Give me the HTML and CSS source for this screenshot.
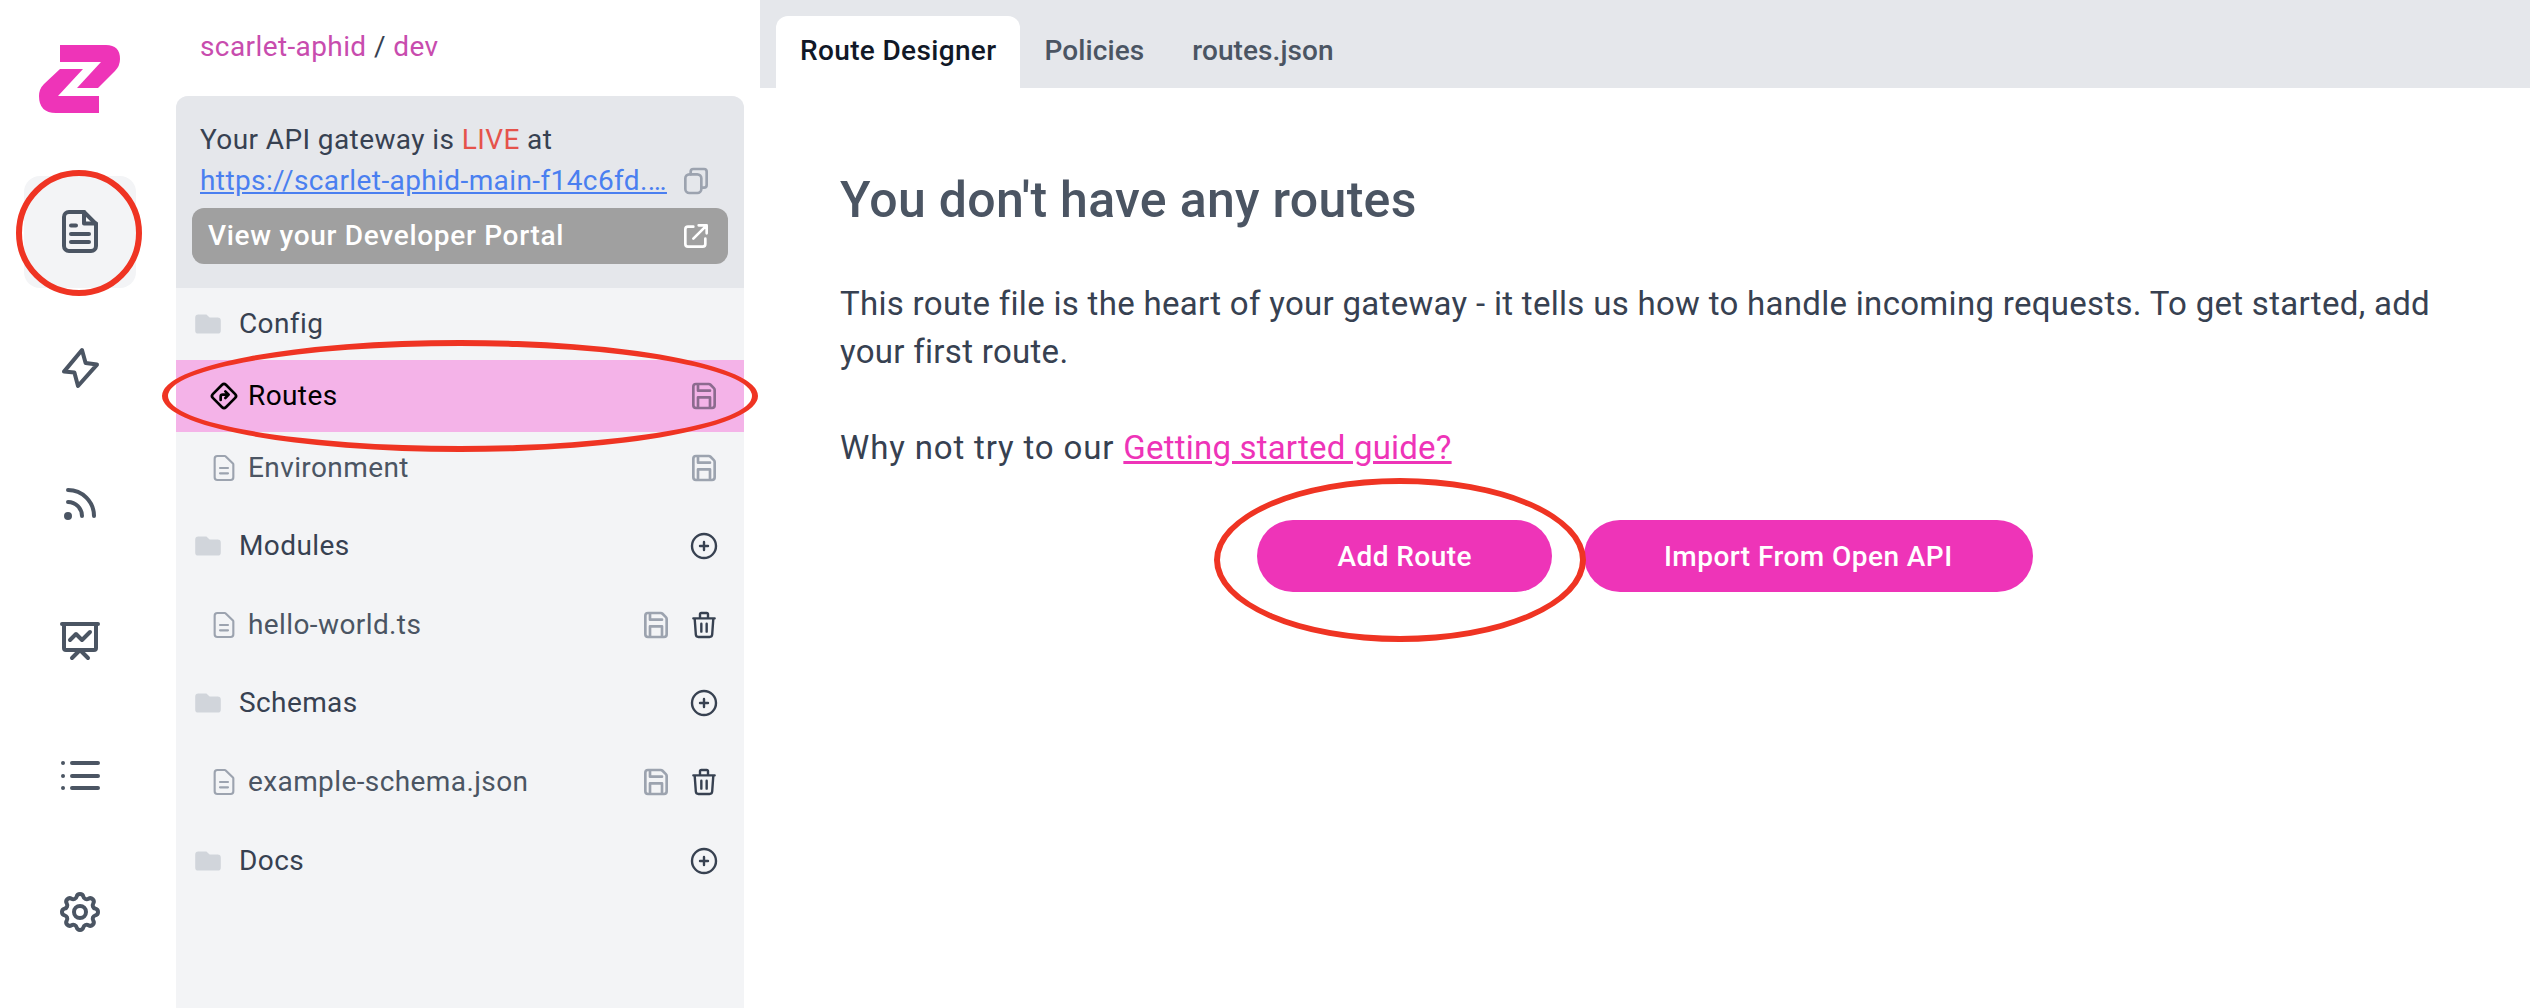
FILE: index.html
```html
<!DOCTYPE html>
<html lang="en">
<head>
    <meta charset="UTF-8">
    <meta name="viewport" content="width=device-width, initial-scale=1.0">
    <title>Route Designer</title>
    <link rel="stylesheet" href="styles.css">
</head>
<body>
    <svg width="0" height="0" class="defs">
        <symbol id="i-file" viewBox="0 0 24 24"><path d="M9 12h6m-6 4h6m2 5H7a2 2 0 01-2-2V5a2 2 0 012-2h5.586a1 1 0 01.707.293l5.414 5.414a1 1 0 01.293.707V19a2 2 0 01-2 2z"/></symbol>
        <symbol id="i-save" viewBox="0 0 24 24"><path d="M6 3h9.500a2 2 0 011.400.600l2.500 2.500a2 2 0 01.600 1.400V19a2 2 0 01-2 2H6a2 2 0 01-2-2V5a2 2 0 012-2zM7.500 3.500V8h9M7.500 21v-8h9v8"/></symbol>
        <symbol id="i-plus" viewBox="0 0 24 24"><path d="M12 9v3m0 0v3m0-3h3m-3 0H9m12 0a9 9 0 11-18 0 9 9 0 0118 0z"/></symbol>
        <symbol id="i-trash" viewBox="0 0 24 24"><path d="M19 7l-.867 12.142A2 2 0 0116.138 21H7.862a2 2 0 01-1.995-1.858L5 7m5 4v6m4-6v6m1-10V4a1 1 0 00-1-1h-4a1 1 0 00-1 1v3M4 7h16"/></symbol>
        <symbol id="i-folder" viewBox="0 0 20 20"><path d="M2 6a2 2 0 012-2h5l2 2h5a2 2 0 012 2v6a2 2 0 01-2 2H4a2 2 0 01-2-2V6z"/></symbol>
    </svg>

    <div class="app">
        <nav class="rail">
            <svg class="logo" viewBox="39 45 81 68"><path d="M60 45H106Q120 45 120 59Q120 66 115 71L98 88H77L101 62H60Z"/><path d="M83 69L58 96H99V113H56Q39 113 39 96Q39 89 44 84L60 69Z"/></svg>
            <div class="rail-item active">
                <svg class="rail-icon" viewBox="0 0 24 24"><path class="corner" d="M15.300 4.300l2.500 2.500h-2.500z"/><path d="M6.500 2H14l6 6v11a2.500 2.500 0 01-2.500 2.500h-11A2.500 2.500 0 014 19V4.500A2.500 2.500 0 016.500 2z"/><path d="M14 2v5.700h6M7.500 8.800h2.500M7.500 13h9M7.500 17h9"/></svg>
            </div>
            <div class="rail-item">
                <svg class="rail-icon" viewBox="0 0 24 24"><path d="M13 3l1.800 6.500 5.700.8L11 21l-1.800-6.800-5.200-.4z"/></svg>
            </div>
            <div class="rail-item">
                <svg class="rail-icon" viewBox="0 0 24 24"><path d="M6 5c7.180 0 13 5.820 13 13M6 11a7 7 0 017 7m-6 0a1 1 0 11-2 0 1 1 0 012 0z"/></svg>
            </div>
            <div class="rail-item">
                <svg class="rail-icon" viewBox="0 0 24 24"><path d="M7 12l3-3 3 3 4-4M8 21l4-4 4 4M3 4h18M4 4h16v12a1 1 0 01-1 1H5a1 1 0 01-1-1V4z"/></svg>
            </div>
            <div class="rail-item">
                <svg class="rail-icon" viewBox="0 0 24 24"><path d="M8 5.500h13M8 12h13M8 18h13M3.500 5.500h.01M3.500 12h.01M3.500 18h.01"/></svg>
            </div>
            <div class="rail-item">
                <svg class="rail-icon" viewBox="0 0 24 24"><path d="M10.325 4.317c.426-1.756 2.924-1.756 3.350 0a1.724 1.724 0 002.573 1.066c1.543-.94 3.310.826 2.370 2.370a1.724 1.724 0 001.065 2.572c1.756.426 1.756 2.924 0 3.350a1.724 1.724 0 00-1.066 2.573c.94 1.543-.826 3.310-2.370 2.370a1.724 1.724 0 00-2.572 1.065c-.426 1.756-2.924 1.756-3.350 0a1.724 1.724 0 00-2.573-1.066c-1.543.94-3.310-.826-2.370-2.370a1.724 1.724 0 00-1.065-2.572c-1.756-.426-1.756-2.924 0-3.350a1.724 1.724 0 001.066-2.573c-.94-1.543.826-3.310 2.370-2.370.996.608 2.296.07 2.572-1.065z"/><path d="M15 12a3 3 0 11-6 0 3 3 0 016 0z"/></svg>
            </div>
        </nav>

        <aside class="sidebar">
            <div class="breadcrumb"><span class="crumb">scarlet-aphid</span> / <span class="crumb">dev</span></div>
            <div class="panel">
                <div class="gateway">
                    <div class="gateway-text">Your API gateway is <span class="live">LIVE</span> at</div>
                    <div class="gateway-url">
                        <a class="url" href="#">https://scarlet-aphid-main-f14c6fd.…</a>
                        <svg class="copy-icon" viewBox="0 0 24 24"><path d="M8 7V5a2 2 0 012-2h8a2 2 0 012 2v10a2 2 0 01-2 2h-2"/><rect x="4" y="7" width="12" height="14" rx="3"/></svg>
                    </div>
                    <a class="portal" href="#">
                        <span>View your Developer Portal</span>
                        <svg class="portal-icon" viewBox="0 0 24 24"><path d="M10 5H6a2 2 0 00-2 2v11a2 2 0 002 2h11a2 2 0 002-2v-4M14 4h6v6M20 4L10 14"/></svg>
                    </a>
                </div>

                <div class="row row-tall folder">
                    <svg class="folder-icon"><use href="#i-folder"/></svg>
                    <span class="name">Config</span>
                </div>
                <div class="row row-tall file selected">
                    <svg class="route-icon" viewBox="0 0 24 24"><path d="M10.600 3.600a2 2 0 012.800 0l7 7a2 2 0 010 2.800l-7 7a2 2 0 01-2.800 0l-7-7a2 2 0 010-2.800z"/><path d="M9.500 15v-2.500a1.500 1.500 0 011.500-1.500h4M13 8.500l2.500 2.500-2.500 2.500"/></svg>
                    <span class="name">Routes</span>
                    <span class="actions"><svg class="action muted"><use href="#i-save"/></svg></span>
                </div>
                <div class="row row-tall file">
                    <svg class="file-icon"><use href="#i-file"/></svg>
                    <span class="name">Environment</span>
                    <span class="actions"><svg class="action muted"><use href="#i-save"/></svg></span>
                </div>

                <div class="tree">
                    <div class="row folder">
                        <svg class="folder-icon"><use href="#i-folder"/></svg>
                        <span class="name">Modules</span>
                        <span class="actions"><svg class="action"><use href="#i-plus"/></svg></span>
                    </div>
                    <div class="row file">
                        <svg class="file-icon"><use href="#i-file"/></svg>
                        <span class="name">hello-world.ts</span>
                        <span class="actions"><svg class="action muted"><use href="#i-save"/></svg><svg class="action"><use href="#i-trash"/></svg></span>
                    </div>
                    <div class="row folder">
                        <svg class="folder-icon"><use href="#i-folder"/></svg>
                        <span class="name">Schemas</span>
                        <span class="actions"><svg class="action"><use href="#i-plus"/></svg></span>
                    </div>
                    <div class="row file">
                        <svg class="file-icon"><use href="#i-file"/></svg>
                        <span class="name">example-schema.json</span>
                        <span class="actions"><svg class="action muted"><use href="#i-save"/></svg><svg class="action"><use href="#i-trash"/></svg></span>
                    </div>
                    <div class="row folder">
                        <svg class="folder-icon"><use href="#i-folder"/></svg>
                        <span class="name">Docs</span>
                        <span class="actions"><svg class="action"><use href="#i-plus"/></svg></span>
                    </div>
                </div>
            </div>
        </aside>

        <main class="main">
            <div class="tabs">
                <div class="tab current">Route Designer</div>
                <div class="tab">Policies</div>
                <div class="tab">routes.json</div>
            </div>
            <div class="content">
                <h1>You don't have any routes</h1>
                <p>This route file is the heart of your gateway - it tells us how to handle incoming requests. To get started, add your first route.</p>
                <p class="guide">Why not try to our <a href="#">Getting started guide?</a></p>
                <div class="buttons">
                    <button>Add Route</button>
                    <button>Import From Open API</button>
                </div>
            </div>
        </main>
    </div>

    <!-- red annotations drawn over the screenshot -->
    <div class="mark mark-nav"></div>
    <div class="mark mark-routes"></div>
    <div class="mark mark-add"></div>
</body>
</html>
```

FILE: styles.css
```css
* {
    box-sizing: border-box;
}
body {
    font-family: Roboto, Arial, sans-serif;
    font-size: 28px;
    line-height: 40px;
    letter-spacing: 0.4px;
    color: #374151;
    background-color: #fff;
    margin: 0;
    padding: 0;
    overflow: hidden;
}
svg {
    display: block;
    flex-shrink: 0;
}
.defs {
    position: absolute;
}
.app {
    display: flex;
    height: 1008px;
}

/* left icon rail */
.rail {
    width: 176px;
    padding: 45px 0 0 24px;
}
.logo {
    width: 81px;
    height: 68px;
    margin: 0 0 63px 15px;
    fill: #ee34b8;
}
.rail-item {
    width: 112px;
    height: 112px;
    margin-bottom: 24px;
    border-radius: 16px;
    display: flex;
    align-items: center;
    justify-content: center;
}
.rail-item.active {
    background-color: #f3f4f6;
}
.rail-icon {
    width: 48px;
    height: 48px;
    fill: none;
    stroke: #4b5563;
    stroke-width: 2;
    stroke-linecap: round;
    stroke-linejoin: round;
}
.rail-icon .corner {
    stroke: none;
    fill: #fff;
}

/* file tree */
.sidebar {
    width: 568px;
    display: flex;
    flex-direction: column;
}
.breadcrumb {
    height: 96px;
    padding: 27px 0 0 24px;
}
.crumb {
    color: #c84cae;
}
.panel {
    flex: 1;
    background-color: #f3f4f6;
    border-radius: 12px 12px 0 0;
    overflow: hidden;
}
.gateway {
    height: 192px;
    background-color: #e5e7eb;
    padding: 24px 16px 0;
}
.gateway-text {
    padding-left: 8px;
}
.live {
    color: #e5534b;
}
.gateway-url {
    display: flex;
    align-items: center;
    justify-content: space-between;
    padding: 0 16px 0 8px;
    height: 41px;
}
.url {
    color: #4a7ff0;
}
.copy-icon, .portal-icon {
    width: 32px;
    height: 32px;
    fill: none;
    stroke-width: 2;
    stroke-linecap: round;
    stroke-linejoin: round;
}
.copy-icon {
    stroke: #9ca3af;
}
.portal-icon {
    stroke: #fff;
}
.portal {
    display: flex;
    align-items: center;
    justify-content: space-between;
    height: 56px;
    margin-top: 7px;
    padding: 0 16px;
    background-color: #a0a0a0;
    border-radius: 12px;
    color: #fff;
    text-decoration: none;
    font-weight: 500;
    letter-spacing: 0.7px;
}
.row {
    display: flex;
    align-items: center;
    height: 78.600px;
    padding: 0 24px 0 16px;
}
.row-tall {
    height: 72px;
}
.tree {
    padding-top: 3px;
}
.folder-icon {
    width: 32px;
    height: 32px;
    fill: #d1d5db;
    margin-right: 15px;
}
.file {
    padding-left: 32px;
    color: #4b5563;
}
.file-icon {
    width: 32px;
    height: 32px;
    margin-right: 8px;
    fill: none;
    stroke: #9ca3af;
    stroke-width: 1.600;
    stroke-linecap: round;
    stroke-linejoin: round;
}
.route-icon {
    width: 32px;
    height: 32px;
    margin-right: 8px;
    fill: none;
    stroke: #000;
    stroke-width: 2;
    stroke-linecap: round;
    stroke-linejoin: round;
}
.selected {
    background-color: #f4b3e8;
    color: #000;
}
.actions {
    margin-left: auto;
    display: flex;
    gap: 16px;
}
.action {
    width: 32px;
    height: 32px;
    fill: none;
    stroke: #374151;
    stroke-width: 1.800;
    stroke-linecap: round;
    stroke-linejoin: round;
}
.action.muted {
    stroke: #9ca3af;
    stroke-width: 2;
}
.selected .action.muted {
    stroke: #8c6b8f;
}

/* main area */
.main {
    flex: 1;
    margin-left: 16px;
}
.tabs {
    display: flex;
    height: 88px;
    padding: 16px 0 0 16px;
    background-color: #e5e7eb;
    color: #4b5563;
}
.tab {
    padding: 15px 24px 0;
    border-radius: 12px 12px 0 0;
    font-weight: 500;
    letter-spacing: 0.1px;
}
.tab.current {
    background-color: #fff;
    color: #111827;
    letter-spacing: 0.35px;
}
.content {
    padding: 0 48px 0 80px;
}
h1 {
    margin: 82px 0 0;
    font-size: 50px;
    line-height: 60px;
    font-weight: 500;
    letter-spacing: 0.3px;
    color: #4b5563;
}
.content p {
    margin: 50px 0 0;
    font-size: 33px;
    line-height: 48px;
    letter-spacing: 0.3px;
}
.content .guide {
    margin-top: 48px;
    letter-spacing: 0.85px;
}
.guide a {
    color: #ee34b8;
    letter-spacing: 0.2px;
}
.buttons {
    display: flex;
    justify-content: center;
    gap: 32px;
    margin: 48px -48px 0 -80px;
}
button {
    height: 72px;
    padding: 0 80px;
    border: none;
    border-radius: 36px;
    background-color: #ee34b8;
    color: #fff;
    font-family: inherit;
    font-size: 28px;
    font-weight: 500;
    letter-spacing: 0.45px;
}

/* annotations */
.mark {
    position: absolute;
    border: 6px solid #ef3423;
    border-radius: 50%;
}
.mark-nav {
    left: 16px;
    top: 170px;
    width: 126px;
    height: 126px;
}
.mark-routes {
    left: 162px;
    top: 340px;
    width: 596px;
    height: 112px;
}
.mark-add {
    left: 1214px;
    top: 478px;
    width: 372px;
    height: 164px;
}
```
